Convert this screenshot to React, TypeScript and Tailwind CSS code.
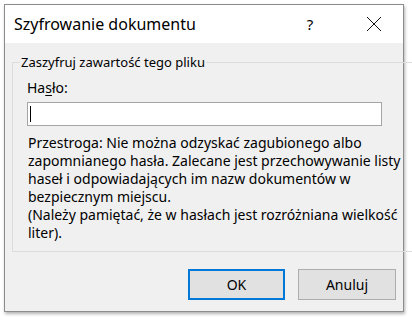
export default function App() {
  return (
    <div className="w-[412px] h-[321px] bg-white pt-[4px] pl-[4px] font-['Noto_Sans',sans-serif] text-black">
      <div className="w-[400px] h-[308px] border border-[#8c8c8c] bg-[#f0f0f0] flex flex-col shadow-[1px_2px_3px_rgba(0,0,0,0.3)]">
        <div className="h-[38px] bg-white flex items-center shrink-0">
          <span className="pl-[9px] text-[16px] leading-[20px]">Szyfrowanie dokumentu</span>
          <span className="ml-auto w-[20px] text-center text-[15px] leading-[20px] mr-[46px]">?</span>
          <svg width="16" height="16" viewBox="0 0 16 16" className="mr-[21px]">
            <path d="M1 1 L15 15 M15 1 L1 15" stroke="#111" strokeWidth="1" fill="none" />
          </svg>
        </div>

        <fieldset className="mx-[7px] mt-[9px] h-[200px] w-[384px] border border-[#dcdcdc] pl-[14px] pr-[12px]">
          <legend className="-ml-[7px] px-[1px] text-[13px] leading-[20px]">Zaszyfruj zawartość tego pliku</legend>
          <div className="mt-[7px] text-[14px] leading-[18px]">
            Ha<span className="underline underline-offset-2">s</span>ło:
          </div>
          <div className="mt-[5px] h-[24px] w-[355px] border border-[#a5a5a5] bg-white flex items-center pl-[2px]">
            <div className="w-[1px] h-[16px] bg-black" />
          </div>
          <p className="mt-[8px] pl-[1px] text-[14px] leading-[18px] whitespace-nowrap">
            Przestroga: Nie można odzyskać zagubionego albo
            <br />
            zapomnianego hasła. Zalecane jest przechowywanie listy
            <br />
            haseł i odpowiadających im nazw dokumentów w
            <br />
            bezpiecznym miejscu.
            <br />
            (Należy pamiętać, że w hasłach jest rozróżniana wielkość
            <br />
            liter).
          </p>
        </fieldset>

        <div className="mt-[17px] flex justify-end gap-[13px] pr-[7px]">
          <button className="w-[97px] h-[31px] border-2 border-[#0078d7] bg-[#e1e1e1] text-[14px]">OK</button>
          <button className="w-[98px] h-[31px] border border-[#adadad] bg-[#e1e1e1] text-[14px]">Anuluj</button>
        </div>
      </div>
    </div>
  );
}
